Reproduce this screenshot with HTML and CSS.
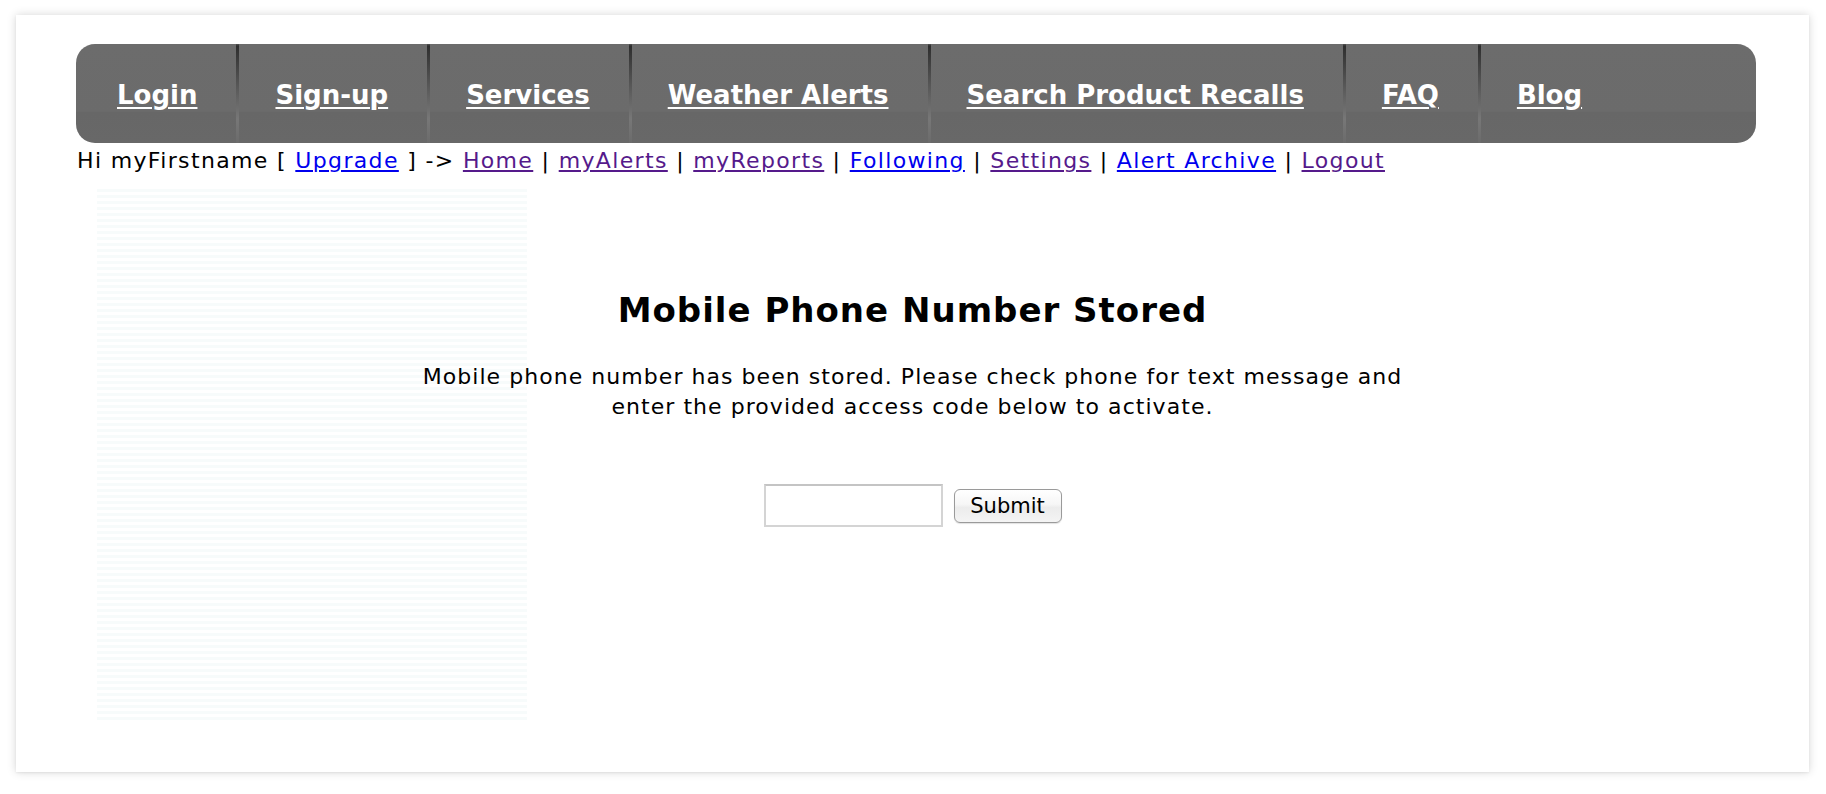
FILE: index.html
```html
<!DOCTYPE html>
<html lang="en">
<head>
<meta charset="utf-8">
<title>Mobile Phone Number Stored</title>
<link rel="stylesheet" href="styles.css">
</head>
<body>
<div class="window">
  <nav class="topnav">
    <a class="nav-item first" href="#">Login</a>
    <a class="nav-item" href="#">Sign-up</a>
    <a class="nav-item" href="#">Services</a>
    <a class="nav-item" href="#">Weather Alerts</a>
    <a class="nav-item" href="#">Search Product Recalls</a>
    <a class="nav-item" href="#">FAQ</a>
    <a class="nav-item" href="#">Blog</a>
  </nav>
  <div class="subnav">Hi myFirstname [ <a class="link" href="#">Upgrade</a> ] -&gt; <a class="link visited" href="#">Home</a> | <a class="link visited" href="#">myAlerts</a> | <a class="link visited" href="#">myReports</a> | <a class="link" href="#">Following</a> | <a class="link visited" href="#">Settings</a> | <a class="link" href="#">Alert Archive</a> | <a class="link visited" href="#">Logout</a></div>
  <main class="main">
    <h1 class="title">Mobile Phone Number Stored</h1>
    <p class="message">Mobile phone number has been stored. Please check phone for text message and<br>enter the provided access code below to activate.</p>
    <form class="code-form" action="#">
      <input class="code-input" type="text" aria-label="Access code">
      <button class="submit-btn" type="button">Submit</button>
    </form>
  </main>
</div>
</body>
</html>
```
FILE: styles.css
```css
html, body {
  margin: 0;
  padding: 0;
  background: #ffffff;
}

body {
  font-family: "DejaVu Sans", Verdana, sans-serif;
  color: #000;
  padding: 15px 17px 22px 16px;
}

.window {
  height: 757px;
  background: #ffffff;
  box-shadow: 0 0 9px rgba(0, 0, 0, 0.16), 0 1px 2px rgba(0, 0, 0, 0.06);
  padding: 29px 53px 0 60px;
  box-sizing: border-box;
  display: flex;
  flex-direction: column;
}

.topnav {
  height: 99px;
  border-radius: 19px;
  background: linear-gradient(to bottom, #6c6c6c 0%, #6b6b6b 68%, #676767 69%, #686868 100%);
  display: flex;
  align-items: stretch;
}

.nav-item {
  display: flex;
  align-items: center;
  padding: 2px 39px 0 36px;
  color: #ffffff;
  font-weight: bold;
  font-size: 26px;
  text-decoration: underline;
  text-decoration-thickness: 2px;
  text-underline-offset: 3px;
  border-right: 3px solid transparent;
  border-image: linear-gradient(to bottom, #6b6b6b 0%, #2e2e2e 3%, #555 40%, #777 75%, #6b6b6b 100%) 1;
}

.nav-item.first {
  padding-left: 41px;
}

.nav-item:last-child {
  border-right: none;
  border-image: none;
}

.subnav {
  margin-top: 5px;
  font-size: 22px;
  line-height: 26px;
  letter-spacing: 1.35px;
  padding-left: 1px;
}

.link {
  color: #0000ee;
  text-decoration: underline;
}

.link.visited {
  color: #551a8b;
}

.main {
  flex: 1;
  display: flex;
  flex-direction: column;
  align-items: center;
  margin-left: -60px;
  margin-right: -53px;
  background-image: repeating-linear-gradient(to bottom, #ffffff 0px, #ffffff 3px, #f7fbfb 3px, #f7fbfb 6px);
  background-repeat: no-repeat;
  background-size: 430px 536px;
  background-position: 81px 12px;
}

.title {
  margin: 116px 0 0 0;
  font-size: 34px;
  line-height: 40px;
  font-weight: bold;
  letter-spacing: 1px;
}

.message {
  margin: 32px 0 0 0;
  font-size: 22px;
  line-height: 30px;
  letter-spacing: 1.05px;
  text-align: center;
}

.code-form {
  margin-top: 62px;
  display: flex;
  align-items: center;
  gap: 11px;
}

.code-input {
  width: 179px;
  height: 43px;
  box-sizing: border-box;
  border: 2px solid #d4d4d4;
  border-top-color: #c4c4c4;
  background: #fff;
  padding: 2px 4px;
  font-size: 20px;
  font-family: "DejaVu Sans", sans-serif;
}

.submit-btn {
  width: 108px;
  height: 34px;
  box-sizing: border-box;
  border: 1px solid #9a9a9a;
  border-radius: 6px;
  background: linear-gradient(to bottom, #ffffff 0%, #f6f6f6 45%, #ececec 55%, #f4f4f4 100%);
  font-family: "DejaVu Sans", sans-serif;
  font-size: 21px;
  color: #000;
  padding: 0;
  box-shadow: 0 1px 1px rgba(0, 0, 0, 0.12);
}
```
